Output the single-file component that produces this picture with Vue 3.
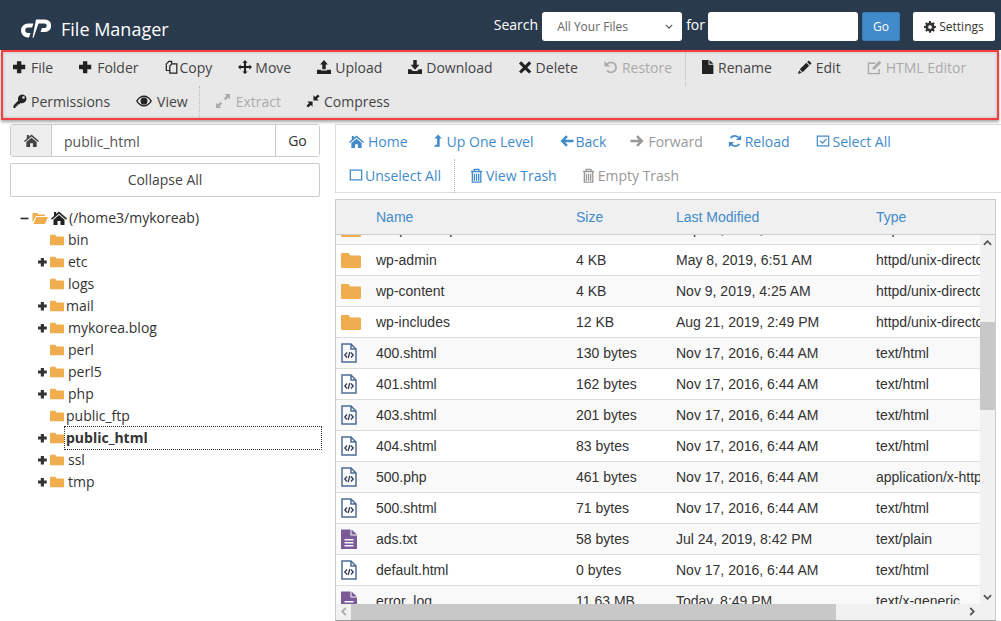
<script setup>
const icons = {
  plus: { f: 'M4.500 1.500h5v4H14v5H9.500V15h-5V10.500H0v-5h4.500z' },
  copy: { s: 'M7.500 4V1.500H4.500L1.500 4.500V12H5.500M10.500 4.500H8L5.500 7v8h8V4.500z', w: 1.4 },
  move: { f: 'M8 0l3 3H9.200v3.800H13V5l3 3-3 3V9.200H9.200V13H11l-3 3-3-3h1.800V9.200H3V11L0 8l3-3v1.800h3.800V3H5z' },
  upload: { f: 'M8 0l4.500 5.200H10v5.300H6V5.200H3.500zM0 11h4.500v1h7v-1H16v5H0z' },
  download: { f: 'M6 0h4v5.500h3L8 11 3 5.500h3zM0 10.500h3.500L5.500 12.500h5l2-2H16V16H0z' },
  times: { f: 'M2.500 1.500L7 6l4.500-4.500L14 4l-4.500 4.500L14 13l-2.500 2.500L7 11l-4.500 4.500L0 13l4.500-4.500L0 4z' },
  undo: { f: 'M.5 1v6.500H7z', s: 'M3.800 4.500A5.800 5.800 0 1 1 3.500 12', w: 2 },
  file: { f: 'M0 0h7.500v5.500H13V16H0zM8.500 0L13 4.300H8.500z' },
  pencil: { f: 'M12.200.5l3.300 3.300-1.800 1.800-3.300-3.300zM9.500 3.200l3.300 3.300-7.500 7.500L2 10.700zM1.300 11.800l2.900 2.900L0 16z' },
  edit: { f: 'M13.300.8l2 2-7.200 7.200H6V8z', s: 'M13 9.500v5H1.500V3.500H9', w: 1.5 },
  key: { f: 'M10.500.5a5 5 0 1 1-1.800 9.700L7 12H5v2H3v2H.5v-3L6 7.300A5 5 0 0 1 10.500.5zM12 2.500a1.500 1.500 0 1 0 0 3 1.500 1.500 0 0 0 0-3z' },
  eye: { f: 'M0 8c2-3.500 4.800-5.500 8-5.500S14 4.500 16 8c-2 3.500-4.800 5.500-8 5.500S2 11.500 0 8zM1.600 8C3.200 10.500 5.400 12 8 12s4.800-1.500 6.400-4C12.800 5.500 10.600 4 8 4S3.200 5.500 1.600 8zM8 4.500a3.500 3.500 0 1 0 0 7 3.500 3.500 0 0 0 0-7z' },
  expand: { f: 'M16 0v6l-2-2-3 3-2-2 3-3-2-2zM0 16v-6l2 2 3-3 2 2-3 3 2 2z' },
  compress: { f: 'M8.500 7.500v-6l2 2 3-3 2 2-3 3 2 2zM7.500 8.500v6l-2-2-3 3-2-2 3-3-2-2z' },
  home: { f: 'M8 1.500L16 8.500l-1 1.200L8 3.700 1 9.700 0 8.500 3 5.900V2h2.200v2zM8 5l5.500 4.700V15H9.500v-4h-3v4H2.500V9.700z' },
  levelup: { f: 'M5 0l4.500 5H7v10H0l1.500-2.500H3.800V5H.5z' },
  left: { f: 'M7 1.500l2 2L6 6.500h9.500v3H6l3 3-2 2L.5 8z' },
  right: { f: 'M9 1.500l-2 2 3 3H.5v3H10l-3 3 2 2L15.500 8z' },
  refresh: { f: 'M15 1v5.800H9.200zM1 15V9.200h5.800z', s: 'M13.500 6.500A6 6 0 0 0 3 4.500M2.500 9.500A6 6 0 0 0 13 11.500', w: 2 },
  check: { s: 'M1.500 2.500h13v11h-13zM4.500 7.500l3 3 4.500-5', w: 1.4 },
  square: { s: 'M1.500 2.500h13v11h-13z', w: 1.5 },
  trash: { s: 'M1 3.700h12M2.500 3.700V15h9V3.700M4.500 3.500V1.500h5v2M4.700 6v7.500M7 6v7.500M9.300 6v7.500', w: 1.4 },
  gear: { f: 'M6.800 0h2.400l.4 2.200 1.300.5 1.800-1.200 1.700 1.700-1.300 1.800.6 1.300 2.200.4v2.400l-2.200.4-.5 1.300 1.200 1.800-1.700 1.700-1.800-1.300-1.300.6-.4 2.200H6.800l-.4-2.200-1.300-.5-1.800 1.200-1.700-1.700 1.300-1.800-.6-1.300L0 9.200V6.800l2.200-.4.500-1.300-1.200-1.800 1.700-1.700 1.800 1.300 1.300-.6zM8 5.500a2.500 2.500 0 1 0 0 5 2.500 2.500 0 0 0 0-5z' },
  folder: { f: 'M0 3a1 1 0 0 1 1-1h5l1.500 2H15a1 1 0 0 1 1 1v8a1 1 0 0 1-1 1H1a1 1 0 0 1-1-1z' },
  folderOpen: { f: 'M.5 12.500V3h4.800L6.800 4.500h6V6H4zM4.500 7H16l-3 7H1.500z' },
  minus: { f: 'M1 6.500h14v3H1z' }
}

const topTools = [
  { icon: 'plus', label: 'File', span: 18 },
  { icon: 'plus', label: 'Folder', span: 18 },
  { icon: 'copy', label: 'Copy', span: 15 },
  { icon: 'move', label: 'Move', span: 17 },
  { icon: 'upload', label: 'Upload', span: 18 },
  { icon: 'download', label: 'Download', span: 18 },
  { icon: 'times', label: 'Delete', span: 17 },
  { icon: 'undo', label: 'Restore', span: 18, off: true, sep: true },
  { icon: 'file', label: 'Rename', span: 16 },
  { icon: 'pencil', label: 'Edit', span: 18 },
  { icon: 'edit', label: 'HTML Editor', span: 19, size: 15, off: true },
  { icon: 'key', label: 'Permissions', span: 18 },
  { icon: 'eye', label: 'View', span: 21, size: 16, pr: 14, sep: true },
  { icon: 'expand', label: 'Extract', span: 20, pr: 15, off: true },
  { icon: 'compress', label: 'Compress', span: 18 }
]

const navTools = [
  { icon: 'home', label: 'Home', span: 19, size: 15 },
  { icon: 'levelup', label: 'Up One Level', span: 13 },
  { icon: 'left', label: 'Back', span: 16, pr: 14 },
  { icon: 'right', label: 'Forward', span: 18, pr: 15, off: true },
  { icon: 'refresh', label: 'Reload', span: 17 },
  { icon: 'check', label: 'Select All', span: 17 },
  { icon: 'square', label: 'Unselect All', span: 16, sep: true },
  { icon: 'trash', label: 'View Trash', span: 16, size: 15, pr: 15 },
  { icon: 'trash', label: 'Empty Trash', span: 16, size: 15, off: true }
]

const tree = [
  { name: 'bin' },
  { name: 'etc', plus: true },
  { name: 'logs' },
  { name: 'mail', plus: true, tight: true },
  { name: 'mykorea.blog', plus: true },
  { name: 'perl' },
  { name: 'perl5', plus: true },
  { name: 'php', plus: true },
  { name: 'public_ftp', tight: true },
  { name: 'public_html', plus: true, tight: true, active: true },
  { name: 'ssl', plus: true },
  { name: 'tmp', plus: true }
]

const dir = 'httpd/unix-directory'
const html = 'text/html'
const files = [
  { k: 'd', n: 'temp-backup', s: '4 KB', m: 'Sep 13, 2019, 1:00 AM', t: dir },
  { k: 'd', n: 'wp-admin', s: '4 KB', m: 'May 8, 2019, 6:51 AM', t: dir },
  { k: 'd', n: 'wp-content', s: '4 KB', m: 'Nov 9, 2019, 4:25 AM', t: dir },
  { k: 'd', n: 'wp-includes', s: '12 KB', m: 'Aug 21, 2019, 2:49 PM', t: dir },
  { k: 'c', n: '400.shtml', s: '130 bytes', m: 'Nov 17, 2016, 6:44 AM', t: html },
  { k: 'c', n: '401.shtml', s: '162 bytes', m: 'Nov 17, 2016, 6:44 AM', t: html },
  { k: 'c', n: '403.shtml', s: '201 bytes', m: 'Nov 17, 2016, 6:44 AM', t: html },
  { k: 'c', n: '404.shtml', s: '83 bytes', m: 'Nov 17, 2016, 6:44 AM', t: html },
  { k: 'c', n: '500.php', s: '461 bytes', m: 'Nov 17, 2016, 6:44 AM', t: 'application/x-httpd-php' },
  { k: 'c', n: '500.shtml', s: '71 bytes', m: 'Nov 17, 2016, 6:44 AM', t: html },
  { k: 't', n: 'ads.txt', s: '58 bytes', m: 'Jul 24, 2019, 8:42 PM', t: 'text/plain' },
  { k: 'c', n: 'default.html', s: '0 bytes', m: 'Nov 17, 2016, 6:44 AM', t: html },
  { k: 't', n: 'error_log', s: '11.63 MB', m: 'Today, 8:49 PM', t: 'text/x-generic' }
]

const toolPad = (t) => (t.pr ? { paddingRight: t.pr + 'px' } : null)
const iconSize = (t) => ({ width: (t.size || 14) + 'px', height: (t.size || 14) + 'px' })
</script>

<template>
  <div class="page">
    <header class="topbar">
      <svg class="logo" viewBox="0 0 30 19" aria-label="cPanel">
        <path fill="#fff" d="M12.500 4.500L11 8.500H7a2.700 2.700 0 0 0 0 5.500h2.500L8 18.500H7a7 7 0 0 1 0-14z" />
        <path fill="#fff" d="M15 .5h9a6.250 6.250 0 0 1 0 12.500h-4.500L21 9h2.500a2.250 2.250 0 0 0 0-4.500h-6L12.500 18.800H12L11.500 18.800z" />
      </svg>
      <span class="brand">File Manager</span>
      <div class="spacer"></div>
      <label class="search-label">Search</label>
      <div class="fake-select">
        <span>All Your Files</span>
        <svg viewBox="0 0 10 6"><path d="M1 1l4 4 4-4" fill="none" stroke="#555" stroke-width="1.500" /></svg>
      </div>
      <label class="for-label">for</label>
      <input class="search-input" type="text" />
      <button class="go-btn">Go</button>
      <button class="settings-btn">
        <svg viewBox="0 0 16 16"><path fill="#333" fill-rule="evenodd" :d="icons.gear.f" /></svg>
        Settings
      </button>
    </header>

    <section class="actions">
      <div class="actions-inner">
        <template v-for="t in topTools" :key="t.label">
          <span class="tool" :class="{ off: t.off }" :style="toolPad(t)">
            <span class="tool-icon" :style="{ width: t.span + 'px' }">
              <svg viewBox="0 0 16 16" :style="iconSize(t)">
                <path v-if="icons[t.icon].f" fill="currentColor" fill-rule="evenodd" :d="icons[t.icon].f" />
                <path v-if="icons[t.icon].s" fill="none" stroke="currentColor" :stroke-width="icons[t.icon].w" :d="icons[t.icon].s" />
              </svg>
            </span>{{ t.label }}
          </span>
          <span v-if="t.sep" class="sep"></span>
        </template>
      </div>
    </section>

    <main class="workspace">
      <aside class="left">
        <div class="path-group">
          <span class="path-home">
            <svg viewBox="0 0 16 16"><path fill="#444" fill-rule="evenodd" :d="icons.home.f" /></svg>
          </span>
          <input class="path-input" type="text" value="public_html" />
          <button class="path-go">Go</button>
        </div>
        <button class="collapse">Collapse All</button>
        <ul class="tree">
          <li class="root">
            <svg class="toggle" viewBox="0 0 16 16"><path fill="#333" :d="icons.minus.f" /></svg>
            <svg class="open" viewBox="0 0 16 16"><path fill="#f0ad4e" :d="icons.folderOpen.f" /></svg>
            <svg class="root-home" viewBox="0 0 16 16"><path fill="#222" fill-rule="evenodd" :d="icons.home.f" /></svg>
            <span>(/home3/mykoreab)</span>
          </li>
          <li v-for="d in tree" :key="d.name" class="node">
            <svg v-if="d.plus" class="plus" viewBox="0 0 16 16"><path fill="#333" :d="icons.plus.f" /></svg>
            <svg class="folder" viewBox="0 0 16 16"><path fill="#f0ad4e" :d="icons.folder.f" /></svg>
            <span class="node-name" :class="{ tight: d.tight, active: d.active }">{{ d.name }}</span>
          </li>
        </ul>
      </aside>

      <section class="right">
        <div class="nav">
          <template v-for="t in navTools" :key="t.label">
            <span class="tool link" :class="{ off: t.off }" :style="toolPad(t)">
              <span class="tool-icon" :style="{ width: t.span + 'px' }">
                <svg viewBox="0 0 16 16" :style="iconSize(t)">
                  <path v-if="icons[t.icon].f" fill="currentColor" fill-rule="evenodd" :d="icons[t.icon].f" />
                  <path v-if="icons[t.icon].s" fill="none" stroke="currentColor" :stroke-width="icons[t.icon].w" :d="icons[t.icon].s" />
                </svg>
              </span>{{ t.label }}
            </span>
            <span v-if="t.sep" class="sep nav-sep"></span>
          </template>
        </div>

        <div class="table">
          <div class="row head">
            <span></span><span>Name</span><span>Size</span><span>Last Modified</span><span>Type</span>
          </div>
          <div class="body">
            <div class="rows">
              <div v-for="f in files" :key="f.n" class="row item">
                <span class="cell-icon">
                  <svg v-if="f.k === 'd'" class="i-folder" viewBox="0 2 16 12" preserveAspectRatio="none"><path fill="#f0ad4e" :d="icons.folder.f" /></svg>
                  <svg v-else-if="f.k === 'c'" class="i-file" viewBox="0 0 16 20">
                    <path fill="none" stroke="#4f6c96" stroke-width="1.500" d="M1 1h9l5 5v13H1zM10 1v5h5" />
                    <path fill="none" stroke="#333c55" stroke-width="1.300" d="M6 9.500L3.800 12 6 14.500M10 9.500l2.200 2.500-2.200 2.500M8.800 9l-1.600 6" />
                  </svg>
                  <svg v-else class="i-file" viewBox="0 0 16 20">
                    <path fill="#7a5b97" fill-rule="evenodd" d="M0 .5h9.500v6H16V20H0zM3.500 10v1.500h9V10zM3.500 13v1.500h9V13zM3.500 16v1.500h9V16z" />
                    <path fill="#7a5b97" d="M10.500.5l5.500 5h-5.500z" />
                  </svg>
                </span>
                <span>{{ f.n }}</span><span>{{ f.s }}</span><span>{{ f.m }}</span><span>{{ f.t }}</span>
              </div>
            </div>
            <div class="vbar">
              <svg class="arr" viewBox="0 0 10 6"><path d="M1 5l4-4 4 4" fill="none" stroke="#555" stroke-width="2" /></svg>
              <div class="vthumb"></div>
              <svg class="arr bottom" viewBox="0 0 10 6"><path d="M1 1l4 4 4-4" fill="none" stroke="#555" stroke-width="2" /></svg>
            </div>
            <div class="hbar">
              <svg class="arr-h" viewBox="0 0 6 10"><path d="M5 1L1 5l4 4" fill="none" stroke="#aaa" stroke-width="2" /></svg>
              <div class="hthumb"></div>
              <svg class="arr-h end" viewBox="0 0 6 10"><path d="M1 1l4 4-4 4" fill="none" stroke="#555" stroke-width="2" /></svg>
            </div>
          </div>
        </div>
      </section>
    </main>
  </div>
</template>

<style>
html, body { margin: 0; background: #fff; overflow: hidden; }
</style>

<style scoped>
.page {
  width: 1001px;
  height: 621px;
  overflow: hidden;
  font-family: "Open Sans", sans-serif;
  font-size: 14px;
  color: #333;
  display: flex;
  flex-direction: column;
  background: #fff;
}
.topbar {
  height: 50px;
  flex: none;
  background: #2a3a4d;
  display: flex;
  align-items: flex-start;
  padding: 12px 6px 0 21px;
  box-sizing: border-box;
  color: #fff;
}
.logo { width: 30px; height: 19px; margin-top: 7px; }
.brand { font-size: 18px; line-height: 24px; margin: 5px 0 0 10px; }
.spacer { flex: 1; }
.search-label, .for-label { line-height: 26px; }
.for-label { margin: 0 3px 0 4px; }
.fake-select {
  width: 140px;
  height: 29px;
  margin-left: 4px;
  background: #fff;
  border-radius: 3px;
  box-sizing: border-box;
  padding: 0 9px 0 15px;
  display: flex;
  align-items: center;
  justify-content: space-between;
  color: #666;
  font-size: 12px;
}
.fake-select svg { width: 8px; height: 5px; }
.search-input {
  width: 150px;
  height: 29px;
  box-sizing: border-box;
  border: 0;
  border-radius: 3px;
  background: #fff;
  padding: 0;
}
.go-btn {
  width: 38px;
  height: 29px;
  margin-left: 4px;
  background: #428bca;
  color: #fff;
  border: 1px solid #357ebd;
  border-radius: 2px;
  font: 12px "Open Sans", sans-serif;
  padding: 0;
}
.settings-btn {
  width: 82px;
  height: 29px;
  margin-left: 13px;
  background: #fff;
  color: #333;
  border: 0;
  border-radius: 2px;
  font: 12px "Open Sans", sans-serif;
  padding: 0;
  display: flex;
  align-items: center;
  justify-content: center;
  gap: 3px;
}
.settings-btn svg { width: 12px; height: 12px; }

.actions {
  flex: none;
  height: 70px;
  margin: 0 2px 0 1px;
  box-sizing: border-box;
  border: 2px solid #f5403f;
  background: #e8e8e8;
  overflow: hidden;
  box-shadow: 0 2px 3px rgba(0, 0, 0, 0.35), inset 0 0 3px rgba(0, 0, 0, 0.25);
}
.actions-inner {
  display: flex;
  flex-wrap: wrap;
  align-items: stretch;
}
.tool {
  display: inline-flex;
  align-items: center;
  box-sizing: border-box;
  height: 34px;
  padding: 0 16px 4px 10px;
  color: #444;
  white-space: nowrap;
}
.tool.off { color: #aaa; }
.tool.link { color: #428bca; padding: 0 16px 2px 10px; }
.tool.link.off { color: #999; }
.tool-icon { display: inline-flex; flex: none; color: #222; }
.tool.off .tool-icon, .tool.link .tool-icon { color: inherit; }
.tool-icon svg { display: block; }
.sep {
  width: 0;
  border-left: 1px dotted #bbb;
  margin: 0 6px 0 -3px;
}
.nav-sep { margin: 0 5px 0 -3px; }

.workspace {
  flex: 1;
  min-height: 0;
  display: flex;
  padding: 4px 0 0 10px;
  gap: 15px;
}
.left { width: 310px; flex: none; }
.path-group {
  height: 33px;
  display: flex;
  border: 1px solid #ccc;
  border-radius: 3px;
  box-sizing: border-box;
}
.path-home {
  width: 41px;
  background: #eee;
  border-right: 1px solid #ccc;
  display: flex;
  align-items: center;
  justify-content: center;
  box-sizing: border-box;
}
.path-home svg { width: 15px; height: 15px; }
.path-input {
  flex: 1;
  min-width: 0;
  border: 0;
  padding: 2px 12px 0;
  font: 14px "Open Sans", sans-serif;
  color: #555;
  background: #fff;
}
.path-go {
  width: 44px;
  border: 0;
  border-left: 1px solid #ccc;
  background: #fff;
  font: 14px "Open Sans", sans-serif;
  color: #333;
  padding: 0;
}
.collapse {
  display: block;
  width: 100%;
  height: 34px;
  margin-top: 6px;
  padding: 0 0 2px;
  background: #fff;
  border: 1px solid #ccc;
  border-radius: 2px;
  font: 14px "Open Sans", sans-serif;
  color: #444;
}
.tree { list-style: none; margin: 10px 0 0; padding: 0; }
.tree li {
  height: 22px;
  display: flex;
  align-items: center;
  position: relative;
  line-height: 22px;
}
.root { padding-left: 10px; }
.toggle { width: 9px; height: 9px; flex: none; }
.open { width: 16px; height: 16px; margin-left: 3px; flex: none; }
.root-home { width: 16px; height: 16px; margin: 0 2px 0 3px; flex: none; }
.node { padding-left: 40px; }
.plus { position: absolute; left: 28px; top: 6px; width: 10px; height: 10px; }
.folder { width: 14px; height: 14px; flex: none; }
.node-name { margin-left: 4px; flex: 1; line-height: 20px; }
.node-name.tight { margin-left: 2px; }
.node-name.active {
  font-weight: 700;
  outline: 1px dotted #333;
  margin-left: 1px;
  padding-left: 1px;
  margin-right: -1px;
  line-height: 22px;
}

.right {
  flex: 1;
  min-width: 0;
  display: flex;
  flex-direction: column;
  padding-right: 5px;
}
.nav {
  height: 69px;
  flex: none;
  display: flex;
  flex-wrap: wrap;
  align-content: flex-start;
  padding-left: 3px;
  border: 1px solid #ddd;
  border-right: 0;
  box-sizing: border-box;
  margin-right: -5px;
  padding-right: 60px;
}
.table {
  flex: 1;
  min-height: 0;
  margin-top: 6px;
  border: 1px solid #ccc;
  border-bottom-color: #999;
  display: flex;
  flex-direction: column;
  box-sizing: border-box;
  height: 415px;
  font-family: "Liberation Sans", Arial, sans-serif;
}
.row {
  display: grid;
  grid-template-columns: 40px 200px 100px 200px 1fr;
  align-items: center;
  white-space: nowrap;
}
.head {
  height: 35px;
  flex: none;
  background: #f0f0f0;
  color: #428bca;
  border-bottom: 1px solid #ccc;
  box-sizing: border-box;
}
.body {
  flex: 1;
  min-height: 0;
  position: relative;
  overflow: hidden;
}
.rows { margin-top: -21px; }
.item {
  height: 31px;
  border-bottom: 1px solid #ddd;
  box-sizing: border-box;
  background: #fff;
}
.item:nth-child(odd) { background: #f9f9f9; }
.cell-icon { padding-left: 4px; display: flex; }
.i-folder { width: 20px; height: 15px; margin-left: 1px; }
.i-file { width: 16px; height: 20px; margin-left: 1px; }
.vbar {
  position: absolute;
  top: 0;
  right: 0;
  bottom: 0;
  width: 15px;
  background: #f1f1f1;
}
.arr { position: absolute; left: 3px; top: 5px; width: 9px; height: 6px; }
.arr.bottom { top: auto; bottom: 20px; }
.vthumb {
  position: absolute;
  top: 87px;
  left: 0;
  right: 0;
  height: 88px;
  background: #c8c8c8;
}
.hbar {
  position: absolute;
  left: 0;
  right: 0;
  bottom: 0;
  height: 16px;
  background: #f1f1f1;
}
.arr-h { position: absolute; left: 5px; top: 3px; width: 6px; height: 9px; }
.arr-h.end { left: auto; right: 20px; }
.hthumb {
  position: absolute;
  left: 15px;
  width: 485px;
  top: 0;
  bottom: 0;
  background: #c8c8c8;
}
</style>
